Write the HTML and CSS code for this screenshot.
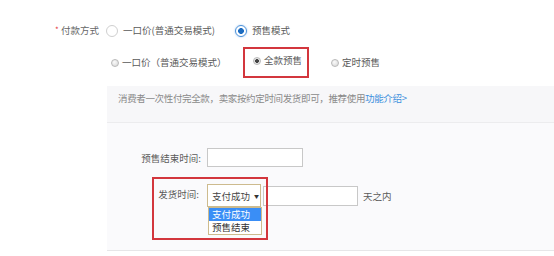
FILE: index.html
```html
<!DOCTYPE html>
<html lang="zh-CN">
<head>
  <meta charset="UTF-8" />
  <meta name="viewport" content="width=device-width, initial-scale=1.0"/>
  <title>付款方式</title>
  <link rel="stylesheet" href="styles.css">
</head>
<body>
  <div class="form">
    <div class="field-row">
      <span class="req">*</span>
      <span class="field-label">付款方式</span>
      <label class="radio"><span class="dot"></span>一口价(普通交易模式)</label>
      <label class="radio on"><span class="dot"></span>预售模式</label>
    </div>

    <div class="sub-row">
      <label class="mini first"><span class="mini-dot"></span>一口价（普通交易模式）</label>
      <label class="mini second checked"><span class="mini-dot"></span>全款预售</label>
      <label class="mini"><span class="mini-dot"></span>定时预售</label>
    </div>

    <div class="panel">
      <div class="panel-tip">
        消费者一次性付完全款，卖家按约定时间发货即可，推荐使用<a class="link" href="#">功能介绍&gt;</a>
      </div>
      <div class="panel-body">
        <div class="line">
          <span class="line-label">预售结束时间:</span>
          <span class="text-input wide"></span>
        </div>
        <div class="line second-line">
          <span class="line-label short">发货时间:</span>
          <div class="select">
            <span>支付成功</span><span class="caret">▼</span>
            <ul class="options">
              <li class="active">支付成功</li>
              <li>预售结束</li>
            </ul>
          </div>
          <span class="text-input"></span>
          <span class="unit">天之内</span>
        </div>
      </div>
    </div>

    <!-- annotation boxes drawn over the form -->
    <div class="mark mark-full"></div>
    <div class="mark mark-ship"></div>
  </div>
</body>
</html>
```

FILE: styles.css
```css
body {
  margin: 0;
  background: #ffffff;
  font-family: "Noto Sans CJK SC", "Noto Sans", sans-serif;
  font-size: 9.5px;
  color: #5a5a5a;
}

.form {
  position: relative;
  width: 554px;
  height: 256px;
  overflow: hidden;
}

/* first row */
.field-row {
  display: flex;
  align-items: center;
  height: 18px;
  margin-top: 22px;
  padding-left: 55px;
  line-height: 1;
}

.req {
  width: 6px;
  color: #e4393c;
  font-size: 8px;
  align-self: flex-start;
  margin-top: 4px;
}

.field-label {
  color: #666;
  margin-right: 7px;
}

.radio {
  display: flex;
  align-items: center;
  gap: 5px;
  margin-right: 20px;
}

.dot {
  box-sizing: border-box;
  width: 12px;
  height: 12px;
  border: 1px solid #cfcfcf;
  border-radius: 50%;
  background: #fff;
}

.radio.on .dot {
  border-color: #4a90d9;
  background: radial-gradient(circle, #1d6cc0 0 2.6px, #fff 3.2px);
  box-shadow: 0 0 2px #9cc6f2;
}

/* second row */
.sub-row {
  display: flex;
  align-items: center;
  height: 18px;
  margin-top: 14px;
  padding-left: 111px;
  line-height: 1;
}

.mini {
  display: flex;
  align-items: center;
  gap: 3px;
}

.mini.first {
  width: 142px;
}

.mini.second {
  width: 78px;
  margin-top: -4px;
}

.mini-dot {
  box-sizing: border-box;
  width: 8px;
  height: 8px;
  border: 1px solid #b9b9b9;
  border-radius: 50%;
  background: radial-gradient(circle at 40% 35%, #fafafa, #d6d6d6);
}

.mini.checked .mini-dot {
  background: radial-gradient(circle, #444 0 1.6px, #e6e6e6 2.2px);
}

/* gray panel */
.panel {
  margin-top: 14px;
  margin-left: 107px;
}

.panel-tip {
  box-sizing: border-box;
  height: 37px;
  padding: 6px 11px 0;
  line-height: 13px;
  letter-spacing: -0.35px;
  background: #f7f7f9;
  border-bottom: 1px solid #ececee;
  color: #8a8a8a;
}

.link {
  color: #3c8fdd;
  text-decoration: none;
}

.panel-body {
  box-sizing: border-box;
  height: 128px;
  padding-top: 25px;
  background: #fafafc;
  border-bottom: 1px solid #e6e6e8;
}

.line {
  display: flex;
  align-items: center;
  height: 19px;
}

.second-line {
  height: 23px;
  margin-top: 17px;
}

.line-label {
  width: 94px;
  margin-right: 6px;
  text-align: right;
}

.line-label.short {
  width: 92px;
  margin-right: 8px;
  padding-bottom: 4px;
}

.text-input {
  box-sizing: border-box;
  width: 95px;
  height: 20px;
  border: 1px solid #c8c8c8;
  background: #fff;
}

.text-input.wide {
  width: 96px;
  height: 19px;
}

.select {
  position: relative;
  box-sizing: border-box;
  display: flex;
  align-items: center;
  width: 54px;
  height: 23px;
  padding-left: 4px;
  border: 1px solid #cdbb8e;
  background: #fff;
  color: #444;
}

.caret {
  margin-left: 4px;
  font-size: 5px;
  color: #333;
}

.second-line .text-input {
  margin-left: 2px;
}

.unit {
  margin-left: 5px;
}

.options {
  position: absolute;
  top: 22px;
  left: 0;
  box-sizing: border-box;
  width: 54px;
  margin: 0;
  padding: 0;
  list-style: none;
  border: 1px solid #cdbb8e;
  background: #fff;
  line-height: 13px;
}

.options li {
  padding-left: 3px;
  color: #333;
}

.options li.active {
  background: #3a8ef6;
  color: #fff;
}

/* red annotation frames */
.mark {
  position: absolute;
  box-sizing: border-box;
  border: 2px solid #d3363d;
}

.mark-full {
  left: 243px;
  top: 47px;
  width: 66px;
  height: 31px;
}

.mark-ship {
  left: 152px;
  top: 177px;
  width: 116px;
  height: 63px;
}
```
